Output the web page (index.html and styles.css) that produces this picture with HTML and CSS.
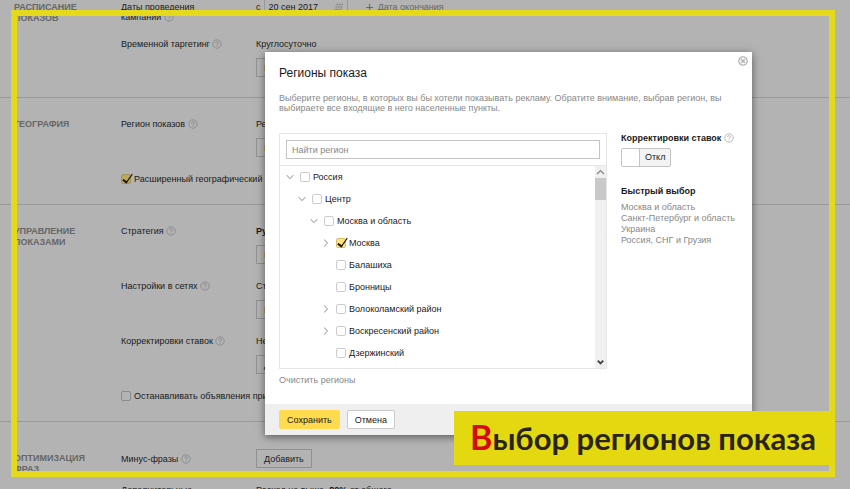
FILE: index.html
```
<!DOCTYPE html>
<html lang="ru">
<head>
    <meta charset="UTF-8">
    <meta name="viewport" content="width=device-width, initial-scale=1.0">
    <title>Регионы показа</title>
    <link rel="stylesheet" href="styles.css">
</head>
<body>
    <!-- Shared icons -->
    <svg class="icons" aria-hidden="true">
        <symbol id="help" viewBox="0 0 10 10">
            <circle cx="5" cy="5" r="4.2" fill="none" stroke="currentColor" stroke-width="0.8"/>
            <path d="M3.6 4.1C3.6 2.2 6.5 2.3 6.4 4C6.3 5 5 4.9 5 6.1M5 6.9V7.7" fill="none" stroke="currentColor" stroke-width="0.9"/>
        </symbol>
        <symbol id="chevron" viewBox="0 0 8 8">
            <path d="M0.7 2.2L4 5.6L7.3 2.2" fill="none" stroke="currentColor"/>
        </symbol>
    </svg>

    <!-- Campaign settings -->
    <main class="settings">
        <section class="section">
            <h2>Расписание показов</h2>
            <div class="rows">
                <div class="row">
                    <div class="name">Даты проведения<br>кампании <svg class="help"><use href="#help"/></svg></div>
                    <div class="dates">
                        <label for="start">с</label>
                        <span class="date-box">
                            <input id="start" type="text" value="20 сен 2017">
                            <svg class="calendar" viewBox="0 0 11 9"><path d="M3 1.5H10M2 4H9.5M1 6.5H8.5M4.5 0L2.5 9M7 0L5 9M9.5 0L7.5 9" fill="none" stroke="currentColor" stroke-width="0.8"/></svg>
                        </span>
                        <button class="add-date" type="button"><span class="plus">+</span>Дата окончания</button>
                    </div>
                </div>
                <div class="row">
                    <div class="name">Временной таргетинг <svg class="help"><use href="#help"/></svg></div>
                    <div class="value">Круглосуточно<button class="btn accent" type="button">Изменить</button></div>
                </div>
            </div>
        </section>

        <section class="section">
            <h2>География</h2>
            <div class="rows">
                <div class="row">
                    <div class="name">Регион показов <svg class="help"><use href="#help"/></svg></div>
                    <div class="value">Регионы<button class="btn accent" type="button">Изменить</button></div>
                </div>
                <label class="check"><input type="checkbox" checked>Расширенный географический таргетинг</label>
            </div>
        </section>

        <section class="section">
            <h2>Управление показами</h2>
            <div class="rows">
                <div class="row">
                    <div class="name">Стратегия <svg class="help"><use href="#help"/></svg></div>
                    <div class="value"><b>Ручное управление</b><button class="btn accent" type="button">Изменить</button></div>
                </div>
                <div class="row">
                    <div class="name">Настройки в сетях <svg class="help"><use href="#help"/></svg></div>
                    <div class="value">Стандартные<button class="btn accent" type="button">Изменить</button></div>
                </div>
                <div class="row">
                    <div class="name">Корректировки ставок <svg class="help"><use href="#help"/></svg></div>
                    <div class="value">Не заданы<button class="btn" type="button">Добавить</button></div>
                </div>
                <label class="check"><input type="checkbox">Останавливать объявления при неработающем сайте</label>
            </div>
        </section>

        <section class="section last">
            <h2>Оптимизация фраз</h2>
            <div class="rows">
                <div class="row middle">
                    <div class="name">Минус-фразы <svg class="help"><use href="#help"/></svg></div>
                    <div class="value"><button class="btn" type="button">Добавить</button></div>
                </div>
                <div class="row">
                    <div class="name">Дополнительные</div>
                    <div class="value">Расход не выше&nbsp; <b>80%</b> от общего</div>
                </div>
            </div>
        </section>
    </main>

    <!-- Yellow border -->
    <div class="frame"></div>

    <!-- Region picker -->
    <div class="modal" role="dialog" aria-labelledby="modal-title">
        <button class="close" type="button" aria-label="Закрыть">
            <svg viewBox="0 0 10 10"><circle cx="5" cy="5" r="4.2" fill="none" stroke="currentColor" stroke-width="1.3"/><path d="M3 3L7 7M7 3L3 7" stroke="currentColor" stroke-width="1.5"/></svg>
        </button>
        <div class="modal-body">
            <h1 id="modal-title">Регионы показа</h1>
            <p class="intro">Выберите регионы, в которых вы бы хотели показывать рекламу. Обратите внимание, выбрав регион, вы выбираете все входящие в него населенные пункты.</p>
            <div class="columns">
                <div class="picker">
                    <div class="search"><input type="text" placeholder="Найти регион" aria-label="Найти регион"></div>
                    <div class="list">
                        <ul class="tree">
                            <li class="level-1"><svg class="arrow"><use href="#chevron"/></svg><label class="check"><input type="checkbox">Россия</label></li>
                            <li class="level-2"><svg class="arrow"><use href="#chevron"/></svg><label class="check"><input type="checkbox">Центр</label></li>
                            <li class="level-3"><svg class="arrow"><use href="#chevron"/></svg><label class="check"><input type="checkbox">Москва и область</label></li>
                            <li class="level-4"><svg class="arrow closed"><use href="#chevron"/></svg><label class="check"><input type="checkbox" checked>Москва</label></li>
                            <li class="level-4"><span class="arrow"></span><label class="check"><input type="checkbox">Балашиха</label></li>
                            <li class="level-4"><span class="arrow"></span><label class="check"><input type="checkbox">Бронницы</label></li>
                            <li class="level-4"><svg class="arrow closed"><use href="#chevron"/></svg><label class="check"><input type="checkbox">Волоколамский район</label></li>
                            <li class="level-4"><svg class="arrow closed"><use href="#chevron"/></svg><label class="check"><input type="checkbox">Воскресенский район</label></li>
                            <li class="level-4"><span class="arrow"></span><label class="check"><input type="checkbox">Дзержинский</label></li>
                        </ul>
                        <div class="scrollbar">
                            <svg class="up" viewBox="0 0 8 8"><path d="M1.5 5.5L4 3L6.5 5.5" fill="none" stroke="currentColor"/></svg>
                            <div class="thumb"></div>
                            <svg class="down" viewBox="0 0 8 8"><path d="M2 3L4 5L6 3" fill="none" stroke="currentColor" stroke-width="1.4"/></svg>
                        </div>
                    </div>
                </div>
                <aside class="side">
                    <h3>Корректировки ставок <svg class="help"><use href="#help"/></svg></h3>
                    <button class="toggle" type="button" aria-pressed="false"><span class="knob"></span><span class="state">Откл</span></button>
                    <h3>Быстрый выбор</h3>
                    <ul class="quick">
                        <li><a href="#">Москва и область</a></li>
                        <li><a href="#">Санкт-Петербург и область</a></li>
                        <li><a href="#">Украина</a></li>
                        <li><a href="#">Россия, СНГ и Грузия</a></li>
                    </ul>
                </aside>
            </div>
            <a class="clear" href="#">Очистить регионы</a>
        </div>
        <div class="modal-footer">
            <button class="btn save" type="button">Сохранить</button>
            <button class="btn cancel" type="button">Отмена</button>
        </div>
    </div>

    <div class="caption"><span class="initial">В</span>ыбор регионов показа</div>
</body>
</html>
```
FILE: styles.css
```
* {
    box-sizing: border-box;
}

body {
    margin: 0;
    height: 100vh;
    position: relative;
    overflow: hidden;
    background: #b3b3b3;
    color: #1a1a1a;
    font-family: "Liberation Sans", Arial, sans-serif;
    font-size: 9px;
    line-height: 10px;
}

h1, h2, h3, p, ul {
    margin: 0;
    padding: 0;
}

ul {
    list-style: none;
}

button, input {
    font: inherit;
    color: inherit;
}

button {
    cursor: pointer;
}

.icons {
    display: none;
}

.help {
    width: 10px;
    height: 10px;
    color: #858585;
    vertical-align: top;
}

/* Campaign settings */
.settings {
    height: 100%;
    overflow: hidden;
}

.section {
    display: grid;
    grid-template-columns: 107px 1fr;
    padding: 21px 0 20px 14px;
    border-bottom: 1px solid #999;
}

.section:first-child {
    padding-top: 2px;
}

.section h2 {
    max-width: 90px;
    font-size: 9px;
    line-height: 11px;
    color: #666;
    text-transform: uppercase;
}

.last {
    padding-top: 27px;
    border-bottom: 0;
}

.last h2 {
    padding-top: 4px;
}

.rows {
    display: flex;
    flex-direction: column;
    gap: 17px;
}

.row {
    display: grid;
    grid-template-columns: 135px 1fr;
}

.middle {
    align-items: center;
}

.value .btn {
    display: block;
    margin-top: 9px;
}

.middle .btn {
    margin-top: 0;
}

.btn {
    height: 19px;
    padding: 0 7px;
    border: 1px solid #919191;
    background: transparent;
}

.accent {
    color: #a8693c;
}

.dates {
    display: flex;
    align-items: flex-start;
}

.date-box {
    display: flex;
    align-items: center;
    width: 84px;
    height: 18px;
    margin: -4px 0 -4px 3px;
    padding: 0 3px 0 4px;
    border: 1px solid #999;
}

.date-box input {
    flex: 1;
    min-width: 0;
    padding: 0;
    border: 0;
    background: transparent;
}

.calendar {
    width: 11px;
    height: 9px;
    color: #919191;
}

.add-date {
    display: flex;
    align-items: center;
    gap: 4px;
    margin-left: 18px;
    padding: 0;
    border: 0;
    background: none;
    color: #666;
}

.plus {
    font-size: 14px;
    line-height: 10px;
}

/* Checkboxes */
.check {
    display: flex;
    align-items: center;
    gap: 3px;
}

.check input {
    appearance: none;
    position: relative;
    width: 10px;
    height: 10px;
    margin: 0;
    border: 1px solid #8c8c8c;
    border-radius: 2px;
}

.check input:checked {
    border-color: #a3935a;
    background: #bda85c;
}

.check input:checked::after {
    content: "";
    position: absolute;
    left: 3px;
    top: -3px;
    width: 4px;
    height: 9px;
    border: solid #111;
    border-width: 0 1px 2px 0;
    transform: rotate(35deg);
}

/* Yellow border */
.frame {
    position: absolute;
    inset: 10px 15px 12px 11px;
    border: 6px solid #e4d91a;
    pointer-events: none;
}

/* Region picker */
.modal {
    position: absolute;
    top: 52px;
    left: 265px;
    right: 98px;
    background: #fff;
    box-shadow: 0 2px 8px rgba(0, 0, 0, 0.5);
}

.modal-body {
    padding: 14px 14px 19px;
}

.modal h1 {
    font-size: 12px;
    line-height: 14px;
    font-weight: normal;
}

.close {
    position: absolute;
    top: 4px;
    right: 4px;
    width: 10px;
    height: 10px;
    padding: 0;
    border: 0;
    background: none;
    color: #b3b3b3;
}

.close svg {
    display: block;
}

.intro {
    margin-top: 13px;
    color: #888;
}

.columns {
    display: flex;
    gap: 14px;
    margin-top: 20px;
}

.picker {
    flex: 1;
    border: 1px solid #e6e6e6;
}

.search {
    padding: 6px;
    border-bottom: 1px solid #e6e6e6;
}

.search input {
    display: block;
    width: 100%;
    height: 19px;
    padding: 0 5px;
    border: 1px solid #c4c4c4;
}

.search input::placeholder {
    color: #888;
    opacity: 1;
}

.list {
    display: flex;
}

.tree {
    flex: 1;
    padding: 0 0 4px 6px;
}

.tree li {
    display: flex;
    align-items: center;
    gap: 6px;
    height: 22px;
}

.tree .check input {
    border-color: #ccc;
}

.tree .check input:checked {
    border-color: #d8c069;
    background: #ffe27a;
}

.tree .level-2 {
    padding-left: 12px;
}

.tree .level-3 {
    padding-left: 24px;
}

.tree .level-4 {
    padding-left: 36px;
}

.arrow {
    width: 8px;
    height: 8px;
    color: #888;
}

.closed {
    transform: rotate(-90deg);
}

.scrollbar {
    display: flex;
    flex-direction: column;
    width: 11px;
    background: #f0f0f0;
}

.scrollbar svg {
    width: 11px;
    height: 12px;
    color: #888;
}

.scrollbar .down {
    margin-top: auto;
    color: #444;
}

.thumb {
    height: 22px;
    background: #c9c9c9;
}

.side {
    width: 117px;
    line-height: 11px;
}

.side h3 {
    font-size: 9px;
    line-height: 10px;
}

.side .help {
    color: #aaa;
}

.toggle {
    display: flex;
    height: 19px;
    margin: 5px 0 19px;
    padding: 0;
    border: 1px solid #c4c4c4;
    border-radius: 2px;
    background: #f3f3f3;
    line-height: 17px;
}

.knob {
    width: 18px;
    height: 17px;
    border-right: 1px solid #c4c4c4;
    background: #fff;
}

.state {
    padding: 0 5px;
}

.quick {
    margin-top: 6px;
}

.quick a, .clear {
    color: #888;
    text-decoration: none;
}

.clear {
    display: block;
    margin-top: 6px;
}

.modal-footer {
    display: flex;
    gap: 7px;
    padding: 6px 14px;
    background: #efefef;
}

.save {
    border-color: #ffdb4d;
    border-radius: 2px;
    background: #ffdb4d;
}

.cancel {
    border-color: #c9c9c9;
    border-radius: 2px;
    background: #fff;
}

/* Caption */
.caption {
    position: absolute;
    right: 15px;
    bottom: 24px;
    height: 54px;
    padding: 0 19px 0 16px;
    background: #e4d911;
    color: #2b2412;
    font-family: Lato, sans-serif;
    font-size: 31px;
    font-weight: bold;
    line-height: 52px;
    white-space: nowrap;
}

.initial {
    color: #d60a0a;
    font-size: 34px;
}
```
